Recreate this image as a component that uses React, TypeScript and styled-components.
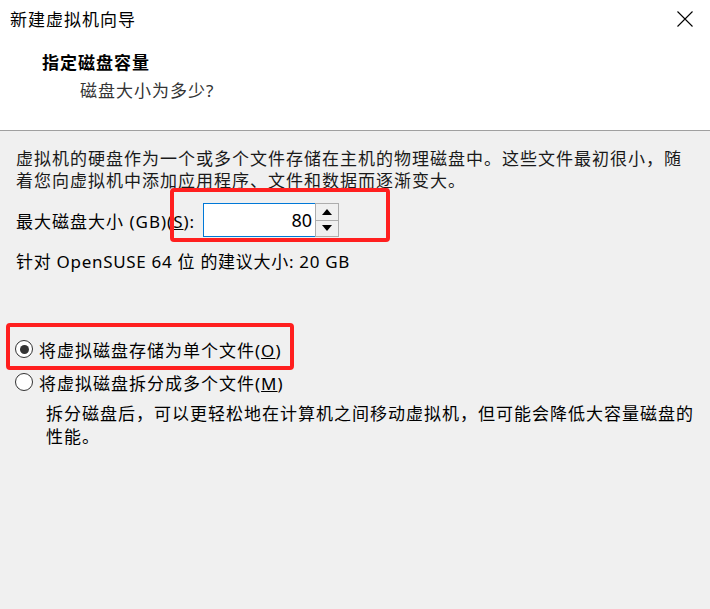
import React from 'react';
import styled, { createGlobalStyle } from 'styled-components';

const FONT = `"Noto Sans", "Noto Sans CJK SC", sans-serif`;
const RED = '#ff1f1f';

const GlobalStyle = createGlobalStyle`
  html, body {
    margin: 0;
    padding: 0;
    background: #f0f0f0;
  }
  body {
    font-family: ${FONT};
    color: #000;
  }
`;

const CloseIcon: React.FC = () => (
  <svg width='16' height='16' viewBox='0 0 16 16'>
    <path d='M0.5 0.5 L15.5 15.5 M15.5 0.5 L0.5 15.5' stroke='#000' strokeWidth='1.1' fill='none' />
  </svg>
);

const ArrowUp: React.FC = () => (
  <svg width='10' height='6' viewBox='0 0 10 6'>
    <path d='M5 0 L10 6 L0 6 Z' fill='#000' />
  </svg>
);

const ArrowDown: React.FC = () => (
  <svg width='10' height='6' viewBox='0 0 10 6'>
    <path d='M0 0 L10 0 L5 6 Z' fill='#000' />
  </svg>
);

const Radio: React.FC<{ checked?: boolean; label: string; hotkey: string }> = ({ checked, label, hotkey }) => (
  <RadioRowS>
    <RadioCircleS>{checked && <RadioDotS />}</RadioCircleS>
    <span>
      {label}(<u>{hotkey}</u>)
    </span>
  </RadioRowS>
);

export default function App() {
  return (
    <>
      <GlobalStyle />
      <WindowS>
        <HeaderS>
          <TitleBarS>
            <TitleS>新建虚拟机向导</TitleS>
            <CloseS>
              <CloseIcon />
            </CloseS>
          </TitleBarS>
          <HeadingS>指定磁盘容量</HeadingS>
          <SubHeadingS>磁盘大小为多少?</SubHeadingS>
        </HeaderS>

        <ContentS>
          <ParagraphS>
            虚拟机的硬盘作为一个或多个文件存储在主机的物理磁盘中。这些文件最初很小，随着您向虚拟机中添加应用程序、文件和数据而逐渐变大。
          </ParagraphS>

          <SizeRowS>
            <span>
              最大磁盘大小 (GB)(<u>S</u>):
            </span>
            <SpinBoxS>
              <InputS>80</InputS>
              <SpinButtonsS>
                <SpinButtonS>
                  <ArrowUp />
                </SpinButtonS>
                <SpinButtonS>
                  <ArrowDown />
                </SpinButtonS>
              </SpinButtonsS>
            </SpinBoxS>
            <HighlightS $left={154} $top={-15} $width={220} $height={54} />
          </SizeRowS>

          <HintS>针对 OpenSUSE 64 位 的建议大小: 20 GB</HintS>

          <RadioGroupS>
            <HighlightWrapS>
              <Radio checked label='将虚拟磁盘存储为单个文件' hotkey='O' />
              <HighlightS $left={-9} $top={-13} $width={288} $height={47} />
            </HighlightWrapS>
            <Radio label='将虚拟磁盘拆分成多个文件' hotkey='M' />
          </RadioGroupS>

          <DescriptionS>
            拆分磁盘后，可以更轻松地在计算机之间移动虚拟机，但可能会降低大容量磁盘的性能。
          </DescriptionS>
        </ContentS>
      </WindowS>
    </>
  );
}

const WindowS = styled.div`
  width: 710px;
  height: 609px;
  background: #f0f0f0;
  overflow: hidden;
  font-size: 17px;
`;

const HeaderS = styled.header`
  background: #fff;
  border-bottom: 1px solid #a0a0a0;
  box-sizing: border-box;
  height: 131px;
`;

const TitleBarS = styled.div`
  display: flex;
  align-items: center;
  justify-content: space-between;
  height: 36px;
  padding: 0 17px 0 10px;
`;

const TitleS = styled.div`
  font-size: 17px;
  letter-spacing: 1px;
`;

const CloseS = styled.div`
  display: flex;
  align-items: center;
  padding-top: 1px;
`;

const HeadingS = styled.div`
  margin: 16px 0 0 42px;
  line-height: 22px;
  font-weight: 700;
  letter-spacing: 1px;
`;

const SubHeadingS = styled.div`
  margin: 6px 0 0 80px;
  line-height: 22px;
  letter-spacing: 1px;
  color: #333;
`;

const ContentS = styled.main`
  padding: 17px 16px 0 16px;
`;

const ParagraphS = styled.p`
  margin: 0;
  line-height: 22px;
  letter-spacing: 1px;
  color: #1a1a1a;
`;

const SizeRowS = styled.div`
  position: relative;
  display: flex;
  align-items: center;
  gap: 8px;
  margin-top: 11px;
  height: 34px;
  letter-spacing: 1px;
`;

const SpinBoxS = styled.div`
  display: flex;
  height: 34px;
`;

const InputS = styled.div`
  width: 112px;
  box-sizing: border-box;
  height: 34px;
  background: #fff;
  border: 1px solid #0078d7;
  border-right: none;
  display: flex;
  align-items: center;
  justify-content: flex-end;
  padding-right: 3px;
  font-size: 18px;
  letter-spacing: 0;
`;

const SpinButtonsS = styled.div`
  display: flex;
  flex-direction: column;
  width: 24px;
`;

const SpinButtonS = styled.div`
  flex: 1;
  display: flex;
  align-items: center;
  justify-content: center;
  background: #f0f0f0;
  border: 1px solid #adadad;
  & + & {
    border-top: none;
  }
`;

const HighlightS = styled.div<{ $left: number; $top: number; $width: number; $height: number }>`
  position: absolute;
  left: ${(p) => p.$left}px;
  top: ${(p) => p.$top}px;
  width: ${(p) => p.$width}px;
  height: ${(p) => p.$height}px;
  box-sizing: border-box;
  border: 4px solid ${RED};
  border-radius: 4px;
  pointer-events: none;
`;

const HintS = styled.div`
  margin-top: 14px;
  line-height: 22px;
  letter-spacing: 0.7px;
`;

const RadioGroupS = styled.div`
  display: flex;
  flex-direction: column;
  gap: 7px;
  margin: 63px 0 0 -1px;
`;

const HighlightWrapS = styled.div`
  position: relative;
`;

const RadioRowS = styled.div`
  display: flex;
  align-items: center;
  gap: 6px;
  height: 26px;
  letter-spacing: 1px;
`;

const RadioCircleS = styled.div`
  width: 18px;
  height: 18px;
  box-sizing: border-box;
  border: 1px solid #333;
  border-radius: 50%;
  background: #fff;
  display: flex;
  align-items: center;
  justify-content: center;
`;

const RadioDotS = styled.div`
  width: 9px;
  height: 9px;
  border-radius: 50%;
  background: #333;
`;

const DescriptionS = styled.p`
  margin: 7px 0 0 30px;
  line-height: 23px;
  letter-spacing: 1px;
`;
